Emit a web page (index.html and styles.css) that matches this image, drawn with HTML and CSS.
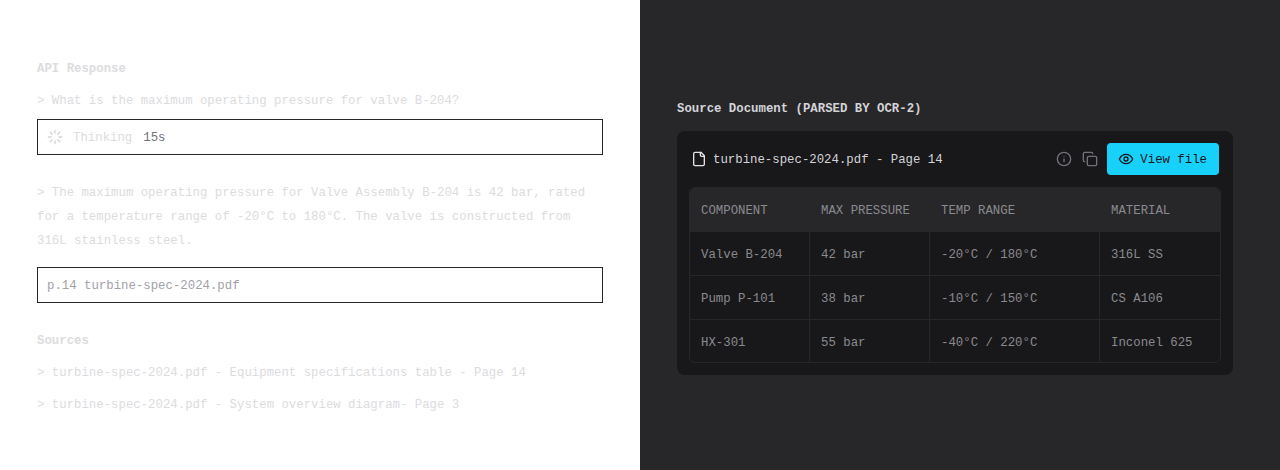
FILE: index.html
```html
<!DOCTYPE html>
<html lang="en">
<head>
    <meta charset="UTF-8">
    <meta name="viewport" content="width=device-width, initial-scale=1.0">
    <title>Source Document</title>
    <link rel="stylesheet" href="styles.css">
</head>
<body>
    <div class="chat-panel">
        <h2 class="faded-title">API Response</h2>
        <p class="faded-line question">&gt; What is the maximum operating pressure for valve B-204?</p>
        <div class="outline-box thinking">
            <svg class="spinner" width="16" height="16" viewBox="0 0 24 24" fill="none" stroke="#d4d4d8" stroke-width="2" stroke-linecap="round">
                <path d="M12 2v4M16.2 7.8l2.9-2.9M18 12h4M16.2 16.2l2.9 2.9M12 18v4M4.9 19.1l2.9-2.9M2 12h4M4.9 4.9l2.9 2.9"/>
            </svg>
            <span class="thinking-label">Thinking</span>
            <span class="thinking-time">15s</span>
        </div>
        <p class="faded-line answer">&gt; The maximum operating pressure for Valve Assembly B-204 is 42 bar, rated for a temperature range of -20°C to 180°C. The valve is constructed from 316L stainless steel.</p>
        <div class="outline-box citation">p.14 turbine-spec-2024.pdf</div>
        <h2 class="faded-title sources-title">Sources</h2>
        <p class="faded-line source">&gt; turbine-spec-2024.pdf - Equipment specifications table - Page 14</p>
        <p class="faded-line source">&gt; turbine-spec-2024.pdf - System overview diagram- Page 3</p>
    </div>

    <div class="doc-panel">
        <h2 class="doc-title">Source Document (PARSED BY OCR-2)</h2>
        <div class="doc-card">
            <div class="doc-header">
                <svg class="file-icon" width="16" height="16" viewBox="0 0 24 24" fill="none" stroke="#e4e4e7" stroke-width="2" stroke-linecap="round" stroke-linejoin="round">
                    <path d="M15 2H6a2 2 0 0 0-2 2v16a2 2 0 0 0 2 2h12a2 2 0 0 0 2-2V7z"/>
                    <path d="M14 2v4a2 2 0 0 0 2 2h4"/>
                </svg>
                <span class="doc-name">turbine-spec-2024.pdf - Page 14</span>
                <svg class="tool-icon" width="16" height="16" viewBox="0 0 24 24" fill="none" stroke="#71717a" stroke-width="2" stroke-linecap="round" stroke-linejoin="round">
                    <circle cx="12" cy="12" r="10"/>
                    <path d="M12 16v-4M12 8h.01"/>
                </svg>
                <svg class="tool-icon copy-icon" width="16" height="16" viewBox="0 0 24 24" fill="none" stroke="#71717a" stroke-width="2" stroke-linecap="round" stroke-linejoin="round">
                    <rect x="8" y="8" width="14" height="14" rx="2"/>
                    <path d="M4 16c-1.1 0-2-.9-2-2V4c0-1.1.9-2 2-2h10c1.1 0 2 .9 2 2"/>
                </svg>
                <button class="view-btn" type="button">
                    <svg width="16" height="16" viewBox="0 0 24 24" fill="none" stroke="#18181b" stroke-width="2" stroke-linecap="round" stroke-linejoin="round">
                        <path d="M2 12s3.6-7 10-7 10 7 10 7-3.6 7-10 7-10-7-10-7z"/>
                        <circle cx="12" cy="12" r="3"/>
                    </svg>
                    <span class="view-label">View file</span>
                </button>
            </div>
            <table class="spec-table">
                <thead>
                    <tr><th class="col-a">COMPONENT</th><th class="col-b">MAX PRESSURE</th><th class="col-c">TEMP RANGE</th><th>MATERIAL</th></tr>
                </thead>
                <tbody>
                    <tr><td>Valve B-204</td><td>42 bar</td><td>-20°C / 180°C</td><td>316L SS</td></tr>
                    <tr><td>Pump P-101</td><td>38 bar</td><td>-10°C / 150°C</td><td>CS A106</td></tr>
                    <tr><td>HX-301</td><td>55 bar</td><td>-40°C / 220°C</td><td>Inconel 625</td></tr>
                </tbody>
            </table>
        </div>
    </div>
</body>
</html>
```

FILE: styles.css
```css
* {
    margin: 0;
    padding: 0;
    box-sizing: border-box;
    font-family: "Liberation Mono", monospace;
}
body {
    display: flex;
    height: 470px;
    overflow: hidden;
    font-size: 12.35px;
    line-height: 24px;
}
.chat-panel {
    width: 640px;
    background: #fff;
    padding: 57px 37px 0;
    color: #dcdcde;
}
.faded-title {
    font-size: 12.35px;
    font-weight: bold;
}
.faded-line {
    margin-top: 8px;
}
.outline-box {
    height: 36px;
    border: 1px solid #27272a;
    padding: 2px 9px 0;
    display: flex;
    align-items: center;
}
.thinking {
    margin-top: 6px;
}
.spinner {
    margin-top: -2px;
    margin-right: 10px;
}
.thinking-time {
    margin-left: 11px;
    color: #71717a;
}
.faded-line.answer {
    margin-top: 26px;
}
.citation {
    margin-top: 14px;
    color: #a1a1aa;
}
.sources-title {
    margin-top: 26px;
}
.doc-panel {
    width: 640px;
    background: #27272a;
    padding: 97px 47px 0 37px;
}
.doc-title {
    font-size: 12.35px;
    font-weight: bold;
    color: #d4d4d8;
}
.doc-card {
    margin-top: 10px;
    background: #18181b;
    border-radius: 8px;
    padding: 12px;
}
.doc-header {
    display: flex;
    align-items: center;
    height: 32px;
    padding: 0 2px;
    margin-bottom: 12px;
}
.file-icon {
    margin-right: 6px;
}
.doc-name {
    flex: 1;
    padding-top: 2px;
    color: #d4d4d8;
}
.tool-icon {
    margin-right: 10px;
}
.copy-icon {
    margin-right: 9px;
}
.view-btn {
    display: flex;
    align-items: center;
    gap: 6px;
    height: 32px;
    padding: 0 12px 0 11px;
    border: none;
    border-radius: 4px;
    background: #18d1fb;
    color: #18181b;
    font-size: 12.35px;
}
.view-label {
    padding-top: 2px;
}
.spec-table {
    width: 100%;
    border-collapse: separate;
    border-spacing: 0;
    table-layout: fixed;
    border: 1px solid #27272a;
    border-radius: 6px;
    overflow: hidden;
    color: #8a8a8e;
}
.spec-table th {
    height: 44px;
    padding: 2px 11px 0;
    background: #27272a;
    text-align: left;
    font-weight: normal;
}
.spec-table td {
    height: 44px;
    padding: 2px 11px 0;
    border-bottom: 1px solid #27272a;
    border-right: 1px solid #27272a;
}
.spec-table tr:last-child td {
    height: 42px;
    padding-top: 4px;
    border-bottom: none;
}
.spec-table td:last-child {
    border-right: none;
}
.col-a, .col-b {
    width: 120px;
}
.col-c {
    width: 170px;
}
```
